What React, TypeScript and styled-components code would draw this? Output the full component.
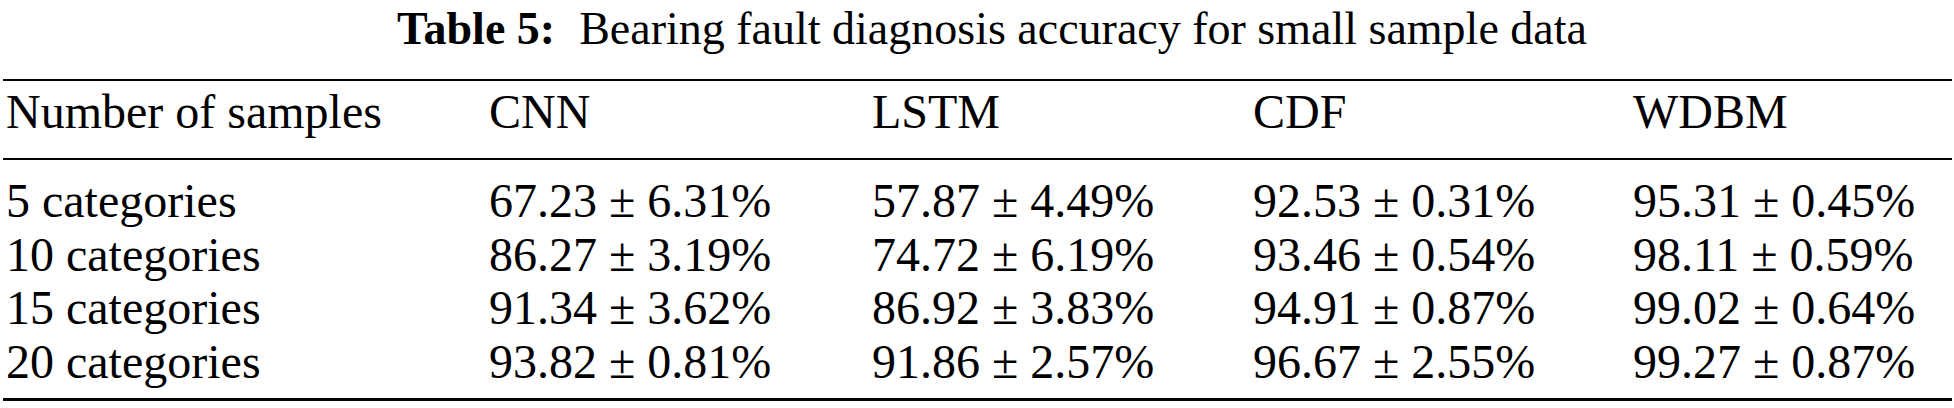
import React from 'react';
import styled, { createGlobalStyle } from 'styled-components';

const GlobalStyle = createGlobalStyle`
  html, body {
    margin: 0;
    padding: 0;
    background: #ffffff;
  }
`;

const Page = styled.div`
  width: 1954px;
  height: 408px;
  overflow: hidden;
  background: #ffffff;
  color: #000000;
  font-family: "Liberation Serif", "Times New Roman", serif;
`;

const Caption = styled.div`
  font-size: 46px;
  line-height: 56px;
  padding-top: 1px;
  margin-bottom: 22px;
  text-align: center;
  padding-left: 30px;
  white-space: nowrap;
  b {
    font-weight: 700;
    margin-right: 24px;
  }
`;

const Table = styled.div`
  margin: 0 2px 0 3px;
  border-top: 2px solid #000;
  border-bottom: 3px solid #000;
`;

const Row = styled.div<{ $head?: boolean }>`
  display: grid;
  grid-template-columns: 483px 383px 381px 380px 1fr;
  font-size: 48px;
  line-height: ${(p) => (p.$head ? '54px' : '53.5px')};
  white-space: nowrap;
`;

const Head = styled(Row)`
  padding: 4px 0 19px;
  border-bottom: 2px solid #000;
`;

const Body = styled.div`
  padding: 14px 0 10px;
`;

const Cell = styled.div`
  padding-left: 3px;
`;

const columns = ['Number of samples', 'CNN', 'LSTM', 'CDF', 'WDBM'];

const rows: [string, string[]][] = [
  ['5 categories', ['67.23 ± 6.31%', '57.87 ± 4.49%', '92.53 ± 0.31%', '95.31 ± 0.45%']],
  ['10 categories', ['86.27 ± 3.19%', '74.72 ± 6.19%', '93.46 ± 0.54%', '98.11 ± 0.59%']],
  ['15 categories', ['91.34 ± 3.62%', '86.92 ± 3.83%', '94.91 ± 0.87%', '99.02 ± 0.64%']],
  ['20 categories', ['93.82 ± 0.81%', '91.86 ± 2.57%', '96.67 ± 2.55%', '99.27 ± 0.87%']],
];

export default function App() {
  return (
    <Page>
      <GlobalStyle />
      <Caption>
        <b>Table 5:</b>Bearing fault diagnosis accuracy for small sample data
      </Caption>
      <Table>
        <Head $head>
          {columns.map((c) => (
            <Cell key={c}>{c}</Cell>
          ))}
        </Head>
        <Body>
          {rows.map(([label, vals]) => (
            <Row key={label}>
              <Cell>{label}</Cell>
              {vals.map((v, i) => (
                <Cell key={i}>{v}</Cell>
              ))}
            </Row>
          ))}
        </Body>
      </Table>
    </Page>
  );
}
